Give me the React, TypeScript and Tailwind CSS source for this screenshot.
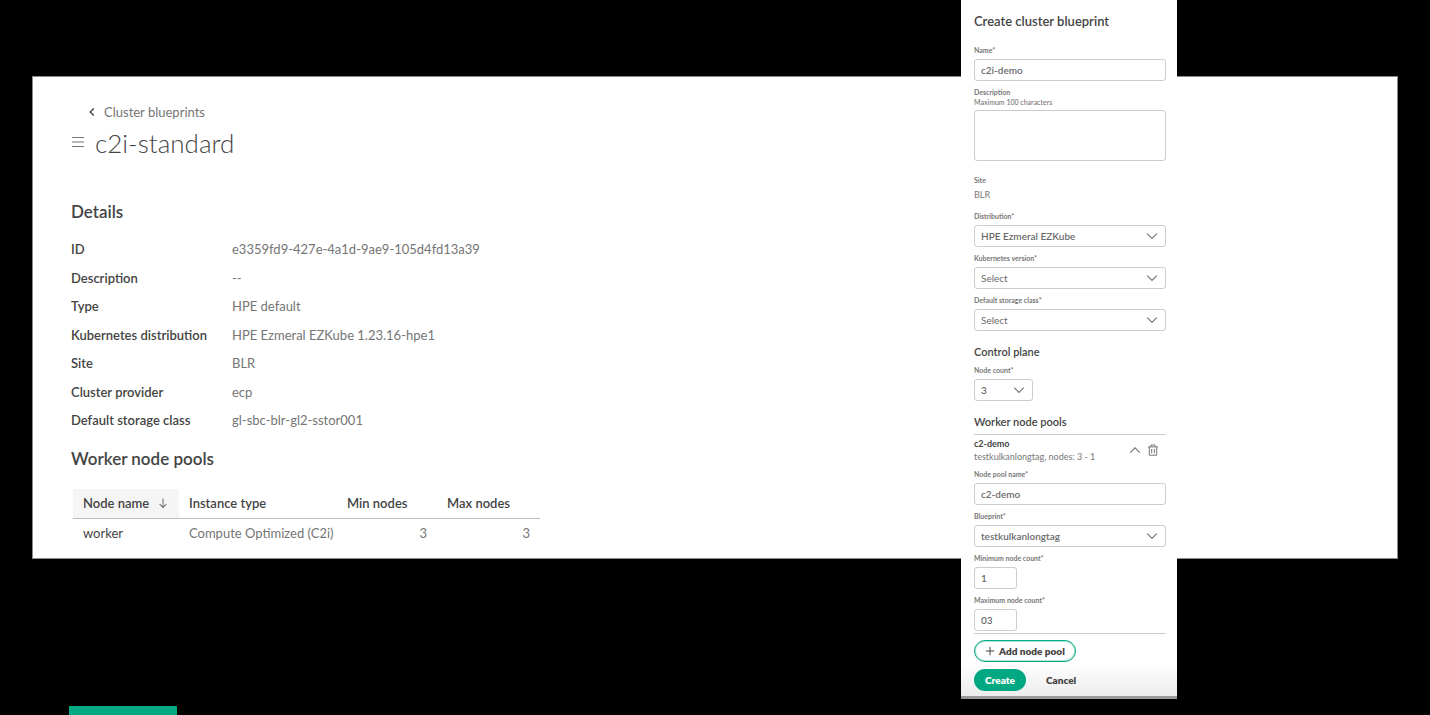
import type { ReactNode } from "react";

const details: [string, string][] = [
  ["ID", "e3359fd9-427e-4a1d-9ae9-105d4fd13a39"],
  ["Description", "--"],
  ["Type", "HPE default"],
  ["Kubernetes distribution", "HPE Ezmeral EZKube 1.23.16-hpe1"],
  ["Site", "BLR"],
  ["Cluster provider", "ecp"],
  ["Default storage class", "gl-sbc-blr-gl2-sstor001"],
];

const boxClass =
  "block h-[22px] appearance-none rounded-[3px] border border-[#cccccc] bg-white px-1.5 pb-px text-[10px] leading-[14px] text-[#6a6a6a] outline-none";

function Chevron({ up = false }: { up?: boolean }) {
  return (
    <svg viewBox="0 0 12 12" className="h-3 w-3" fill="none" stroke="#757575" strokeWidth="1.1">
      <path d={up ? "M1.2 8.6 6 3.8l4.8 4.8" : "M1.2 3.6 6 8.4l4.8-4.8"} />
    </svg>
  );
}

function Label({ htmlFor, children }: { htmlFor: string; children: ReactNode }) {
  return (
    <label htmlFor={htmlFor} className="block text-[7px] leading-[10px] font-bold text-[#777777]">
      {children}
    </label>
  );
}

function TextField({ id, label, value, small = false }: { id: string; label: string; value: string; small?: boolean }) {
  return (
    <div className="flex flex-col gap-1">
      <Label htmlFor={id}>{label}</Label>
      <input id={id} defaultValue={value} className={`${boxClass} font-semibold ${small ? "w-[43px]" : "w-full"}`} />
    </div>
  );
}

function SelectField({
  id,
  label,
  value,
  small = false,
  empty = false,
}: {
  id: string;
  label: string;
  value: string;
  small?: boolean;
  empty?: boolean;
}) {
  return (
    <div className="flex flex-col gap-1">
      <Label htmlFor={id}>{label}</Label>
      <div className={`relative ${small ? "w-[59px]" : "w-full"}`}>
        <select id={id} className={`${boxClass} w-full ${empty ? "font-normal" : "font-semibold"}`}>
          <option>{value}</option>
        </select>
        <span className="pointer-events-none absolute inset-y-0 right-2 flex items-center">
          <Chevron />
        </span>
      </div>
    </div>
  );
}

function BlueprintDetails() {
  return (
    <main className="mx-8 flex-none border border-[#8a8a8a] bg-white pt-[25px] pr-9 pb-[11px] pl-[38px] text-[13px] leading-5 text-[#444444]">
      <a href="#blueprints" className="ml-[15px] inline-flex items-center gap-1.5 text-[#757575]">
        <svg viewBox="0 0 12 12" className="h-3 w-3" fill="none" stroke="#444444" strokeWidth="1.4">
          <path d="M7.8 2.4 4.2 6l3.6 3.6" />
        </svg>
        Cluster blueprints
      </a>
      <div className="mt-0.5 flex items-center gap-2.5">
        <button type="button" aria-label="Menu">
          <svg viewBox="0 0 14 14" className="h-3.5 w-3.5" fill="none" stroke="#757575" strokeWidth="1.1">
            <path d="M1 1.5h12M1 6h12M1 10.5h12" />
          </svg>
        </button>
        <h1 className="text-[26px] leading-9 font-light">c2i-standard</h1>
      </div>

      <h2 className="mt-[39px] text-[17px] leading-6 font-semibold">Details</h2>
      <dl className="mt-[15px] grid h-[191px] grid-cols-[161px_1fr] content-between">
        {details.map(([name, value]) => (
          <div key={name} className="contents">
            <dt className="font-semibold">{name}</dt>
            <dd className="text-[#757575]">{value}</dd>
          </div>
        ))}
      </dl>

      <h2 className="mt-[17px] text-[17px] leading-6 font-semibold">Worker node pools</h2>
      <table className="mt-[18px] ml-0.5 w-[467px] table-fixed text-left">
        <colgroup>
          <col className="w-[106px]" />
          <col className="w-[158px]" />
          <col className="w-[100px]" />
          <col />
        </colgroup>
        <thead>
          <tr className="h-[29px] border-b border-[#bbbbbb]">
            <th className="bg-[#f5f5f5] pl-2.5 font-semibold">
              <button type="button" className="flex items-center gap-2 whitespace-nowrap">
                Node name
                <svg viewBox="0 0 12 12" className="h-3 w-3" fill="none" stroke="#757575" strokeWidth="1.1">
                  <path d="M6 1.5v9M2.6 7.1 6 10.5l3.4-3.4" />
                </svg>
              </button>
            </th>
            <th className="px-2.5 font-semibold">Instance type</th>
            <th className="px-2.5 font-semibold">Min nodes</th>
            <th className="px-2.5 font-semibold">Max nodes</th>
          </tr>
        </thead>
        <tbody>
          <tr className="h-[29px] text-[#757575]">
            <td className="px-2.5 text-[#444444]">worker</td>
            <td className="pl-2.5 whitespace-nowrap">Compute Optimized (C2i)</td>
            <td className="px-2.5 text-right">3</td>
            <td className="px-2.5 text-right">3</td>
          </tr>
        </tbody>
      </table>
    </main>
  );
}

function CreateDrawer() {
  return (
    <aside className="absolute top-0 right-[253px] w-[216px] border-b-[3px] border-[#999999] bg-white bg-linear-to-t from-[#ededed] via-white via-5% to-white px-[11px] pt-3.5 pb-[5px] pl-[13px] text-[#444444]">
      <form>
        <h2 className="text-[13px] leading-[14px] font-semibold">Create cluster blueprint</h2>
        <div className="mt-[17px] flex flex-col gap-1.5">
          <TextField id="name" label="Name*" value="c2i-demo" />
          <div>
            <Label htmlFor="description">Description</Label>
            <p className="text-[7px] leading-[10px] font-medium text-[#777777]">Maximum 100 characters</p>
            <textarea
              id="description"
              className="mt-[3px] block h-[51px] w-full resize-none rounded-[3px] border border-[#cccccc] bg-white px-1.5 py-1 text-[10px] outline-none"
            />
          </div>
        </div>
        <div className="mt-3.5">
          <p className="text-[7px] leading-[10px] font-bold text-[#777777]">Site</p>
          <p className="mt-1 text-[9px] leading-3 text-[#777777]">BLR</p>
        </div>
        <div className="mt-2.5 flex flex-col gap-1.5">
          <SelectField id="distribution" label="Distribution*" value="HPE Ezmeral EZKube" />
          <SelectField id="version" label="Kubernetes version*" value="Select" empty />
          <SelectField id="storage" label="Default storage class*" value="Select" empty />
        </div>

        <h3 className="mt-3.5 mb-1.5 text-[11px] leading-[14px] font-semibold">Control plane</h3>
        <SelectField id="count" label="Node count*" value="3" small />

        <h3 className="mt-3.5 text-[11px] leading-[14px] font-semibold">Worker node pools</h3>
        <section className="mt-[5px] border-y border-[#cccccc] py-0.5">
          <div className="flex items-center justify-between pr-[7px]">
            <div className="whitespace-nowrap">
              <h4 className="text-[9px] leading-[13px] font-bold">c2-demo</h4>
              <p className="text-[9px] leading-[13px] text-[#777777]">testkulkanlongtag, nodes: 3 - 1</p>
            </div>
            <div className="flex items-center gap-1.5">
              <button type="button" aria-label="Collapse">
                <Chevron up />
              </button>
              <button type="button" aria-label="Delete">
                <svg viewBox="0 0 12 12" className="h-3 w-3" fill="none" stroke="#757575">
                  <path d="M1 2.9h10M2.3 3v8.2h7.4V3M4 2.7V1h4v1.7M4.7 5v4.2M7.3 5v4.2" />
                </svg>
              </button>
            </div>
          </div>
          <div className="mt-1.5 flex flex-col gap-1.5">
            <TextField id="pool" label="Node pool name*" value="c2-demo" />
            <SelectField id="blueprint" label="Blueprint*" value="testkulkanlongtag" />
            <TextField id="min" label="Minimum node count*" value="1" small />
            <TextField id="max" label="Maximum node count*" value="03" small />
          </div>
        </section>

        <button
          type="button"
          className="mt-1.5 flex h-[22px] items-center gap-1 rounded-full border border-[#01a982] bg-white px-2.5 text-[10px] font-extrabold ring-1 ring-[#01a982]/30 ring-inset"
        >
          <svg viewBox="0 0 10 10" className="h-2.5 w-2.5" fill="none" stroke="#444444">
            <path d="M5 .8v8.4M.8 5h8.4" />
          </svg>
          Add node pool
        </button>
        <div className="mt-[7px] flex items-center gap-5 text-[10px] font-extrabold">
          <button type="submit" className="h-[22px] rounded-full bg-[#01a982] px-[11px] text-white">
            Create
          </button>
          <button type="button">Cancel</button>
        </div>
      </form>
    </aside>
  );
}

export default function App() {
  return (
    <div className="relative flex min-h-screen flex-col bg-black pt-[76px] font-['Lato',sans-serif]">
      <BlueprintDetails />
      <CreateDrawer />
      <footer className="mt-auto pl-[69px]">
        <div className="h-[9px] w-[108px] bg-[#01a982]" />
      </footer>
    </div>
  );
}
